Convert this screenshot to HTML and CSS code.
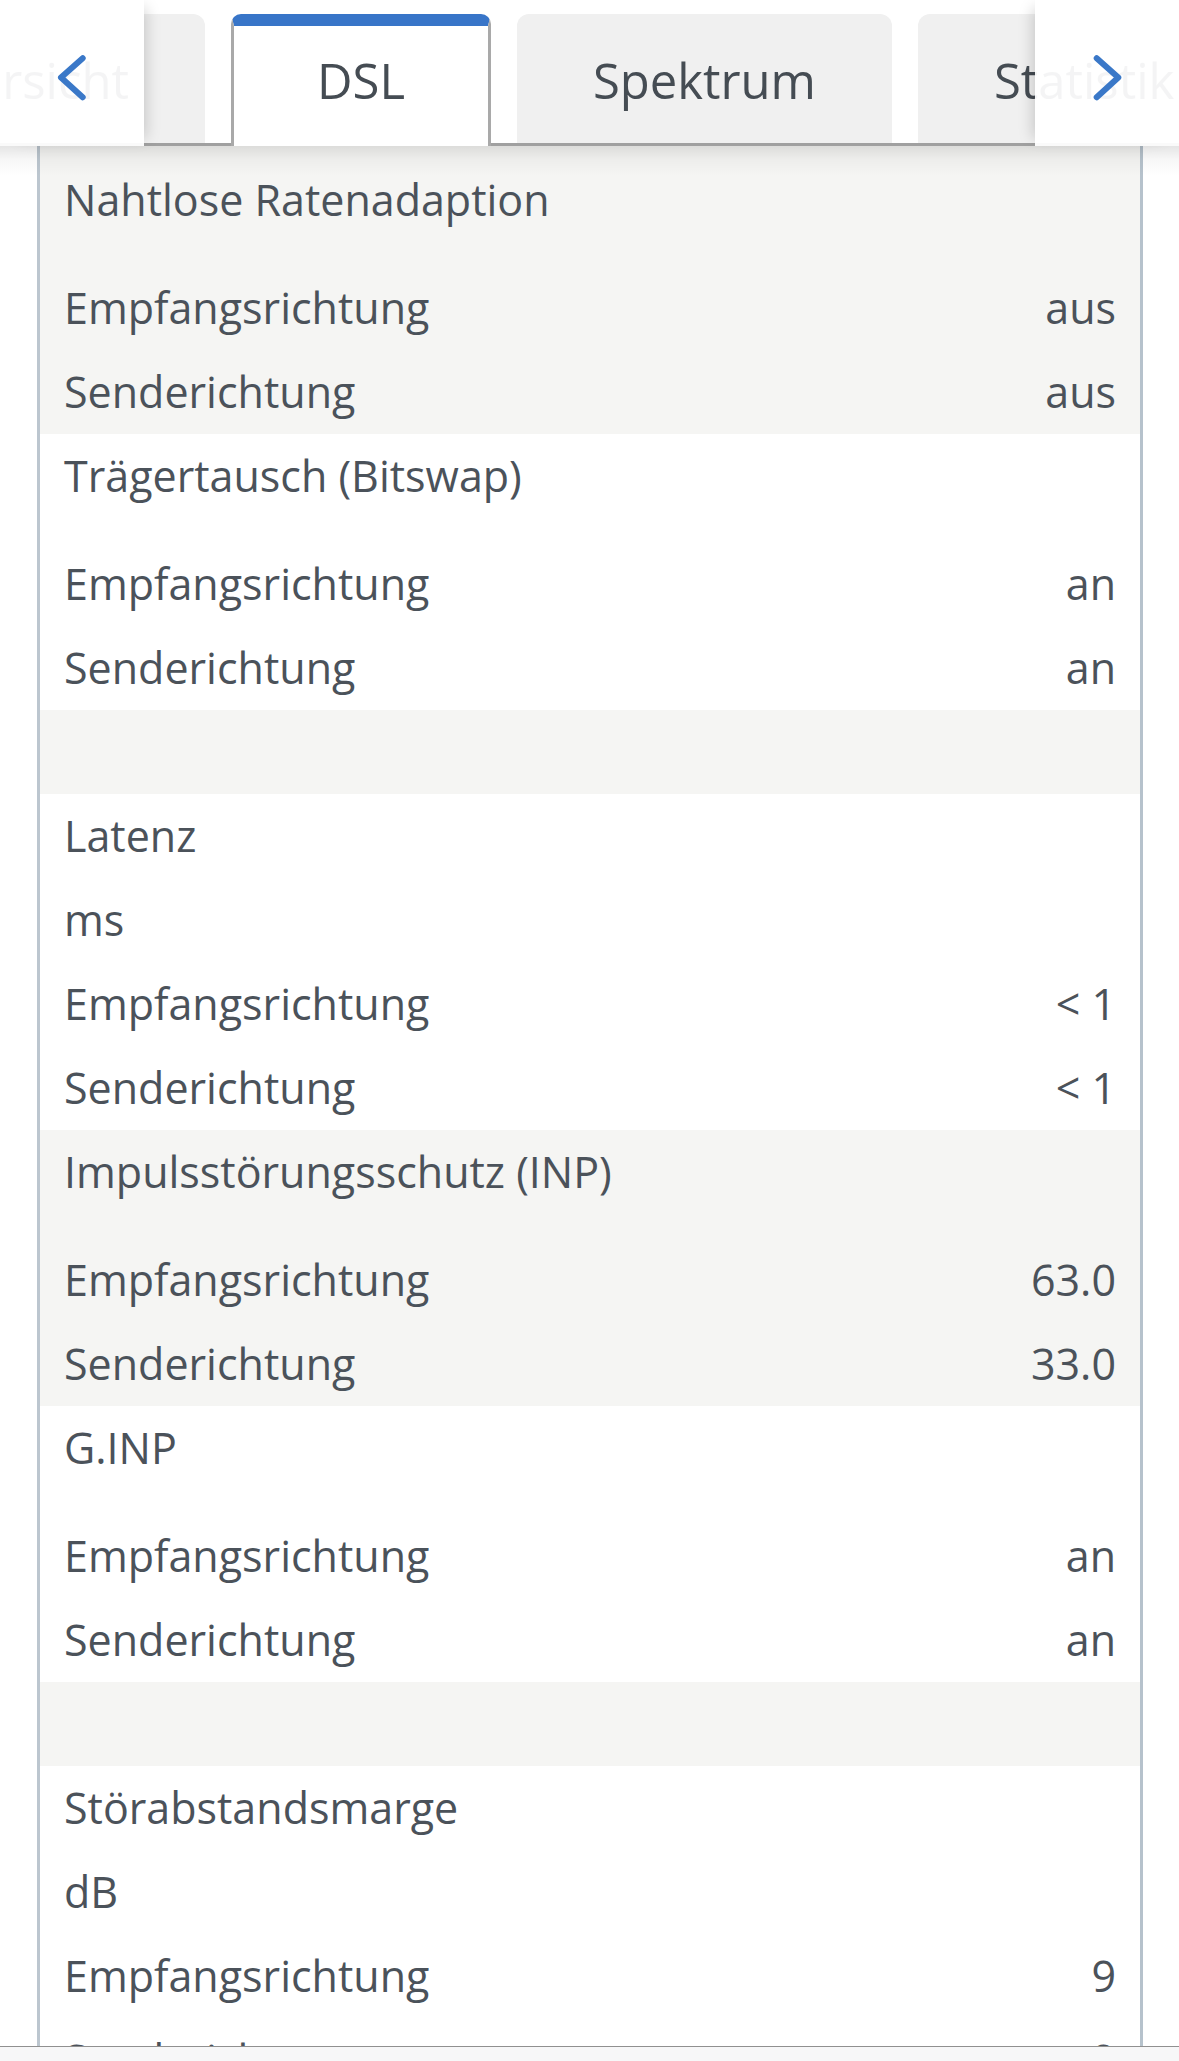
FILE: index.html
```html
<!DOCTYPE html>
<html lang="de">
<head>
<meta charset="utf-8">
<title>DSL</title>
<link rel="stylesheet" href="styles.css">
</head>
<body>
<header class="header">
  <nav class="tabs">
    <div class="tab">Übersicht</div>
    <div class="tab active">DSL</div>
    <div class="tab">Spektrum</div>
    <div class="tab">Statistik</div>
  </nav>
  <div class="scroll-btn left">
    <svg width="30" height="48" viewBox="0 0 30 48"><path d="M25.7 4.3 L4 23.5 L25.7 43.3" fill="none" stroke="#3a78c8" stroke-width="6" stroke-linecap="round" stroke-linejoin="round"/></svg>
  </div>
  <div class="scroll-btn right">
    <svg width="30" height="48" viewBox="0 0 30 48"><path d="M4.7 4.3 L26.3 23.5 L4.7 43.3" fill="none" stroke="#3a78c8" stroke-width="6" stroke-linecap="round" stroke-linejoin="round"/></svg>
  </div>
</header>

<main class="panel">
  <section class="sec gray first">
    <div class="row title">Nahtlose Ratenadaption</div>
    <div class="spacer"></div>
    <div class="row"><span>Empfangsrichtung</span><span>aus</span></div>
    <div class="row"><span>Senderichtung</span><span>aus</span></div>
  </section>
  <section class="sec white">
    <div class="row title">Trägertausch (Bitswap)</div>
    <div class="spacer"></div>
    <div class="row"><span>Empfangsrichtung</span><span>an</span></div>
    <div class="row"><span>Senderichtung</span><span>an</span></div>
  </section>
  <section class="sec gray">
    <div class="row"></div>
  </section>
  <section class="sec white">
    <div class="row title">Latenz</div>
    <div class="row">ms</div>
    <div class="row"><span>Empfangsrichtung</span><span>&lt; 1</span></div>
    <div class="row"><span>Senderichtung</span><span>&lt; 1</span></div>
  </section>
  <section class="sec gray">
    <div class="row title">Impulsstörungsschutz (INP)</div>
    <div class="spacer"></div>
    <div class="row"><span>Empfangsrichtung</span><span>63.0</span></div>
    <div class="row"><span>Senderichtung</span><span>33.0</span></div>
  </section>
  <section class="sec white">
    <div class="row title">G.INP</div>
    <div class="spacer"></div>
    <div class="row"><span>Empfangsrichtung</span><span>an</span></div>
    <div class="row"><span>Senderichtung</span><span>an</span></div>
  </section>
  <section class="sec gray">
    <div class="row"></div>
  </section>
  <section class="sec white">
    <div class="row title">Störabstandsmarge</div>
    <div class="row">dB</div>
    <div class="row"><span>Empfangsrichtung</span><span>9</span></div>
    <div class="row"><span>Senderichtung</span><span>9</span></div>
  </section>
</main>

<footer class="footer"></footer>
</body>
</html>
```

FILE: styles.css
```css
html, body {
  margin: 0;
  padding: 0;
  overflow: hidden;
  background: #ffffff;
}

body {
  font-family: "Open Sans", "Noto Sans", sans-serif;
  color: #4b525a;
  width: 1179px;
  height: 2061px;
}

/* ---------- header with tabs ---------- */
.header {
  position: relative;
  z-index: 2;
  height: 146px;
  background: #ffffff;
}

.header::after {
  content: "";
  position: absolute;
  left: 0;
  right: 0;
  top: 100%;
  height: 30px;
  background: linear-gradient(to bottom, rgba(0, 0, 0, 0.1), rgba(0, 0, 0, 0.03) 45%, rgba(0, 0, 0, 0));
  pointer-events: none;
}

.tabs {
  display: flex;
  align-items: flex-end;
  gap: 26px;
  height: 143px;
  margin-left: -167px;
  width: 1600px;
  border-bottom: 3px solid #a0a0a0;
  box-sizing: content-box;
}

.tab {
  flex: none;
  box-sizing: border-box;
  min-width: 260px;
  height: 129px;
  padding: 33px 76px 0;
  line-height: 67px;
  font-size: 49px;
  text-align: center;
  color: #454c53;
  background: #f0f0f0;
  border-radius: 12px 12px 0 0;
  white-space: nowrap;
}

.tab.active {
  height: 132px;
  margin-bottom: -3px;
  padding-top: 21px;
  background: #ffffff;
  border-top: 12px solid #3875c8;
  border-left: 3px solid #a9a9a9;
  border-right: 3px solid #a9a9a9;
  border-radius: 10px 10px 0 0;
}

.scroll-btn {
  position: absolute;
  top: 0;
  width: 144px;
  height: 146px;
  background: rgba(255, 255, 255, 0.94);
  display: flex;
  align-items: center;
  justify-content: center;
  padding-top: 10px;
  box-sizing: border-box;
}

.scroll-btn.left {
  left: 0;
  box-shadow: 10px 0 14px -8px rgba(0, 0, 0, 0.18);
}

.scroll-btn.right {
  right: 0;
  box-shadow: -10px 0 14px -8px rgba(0, 0, 0, 0.18);
}

.scroll-btn svg {
  display: block;
}

/* ---------- content panel ---------- */
.panel {
  margin: 0 36px 0 37px;
  border-left: 3px solid #bcc6cf;
  border-right: 3px solid #b6c2cc;
  min-height: 1915px;
}

.sec.gray {
  background: #f5f5f3;
}

.sec.white {
  background: #ffffff;
}

.sec.first {
  padding-top: 12px;
}

.row {
  display: flex;
  justify-content: space-between;
  align-items: center;
  height: 84px;
  padding: 0 24px;
  font-size: 43px;
  line-height: 84px;
  white-space: nowrap;
}

.spacer {
  height: 24px;
}

/* ---------- bottom bar ---------- */
.footer {
  position: fixed;
  left: 0;
  right: 0;
  bottom: 0;
  height: 14px;
  background: #f7f7f8;
  border-top: 1px solid #909090;
  z-index: 3;
}
```
